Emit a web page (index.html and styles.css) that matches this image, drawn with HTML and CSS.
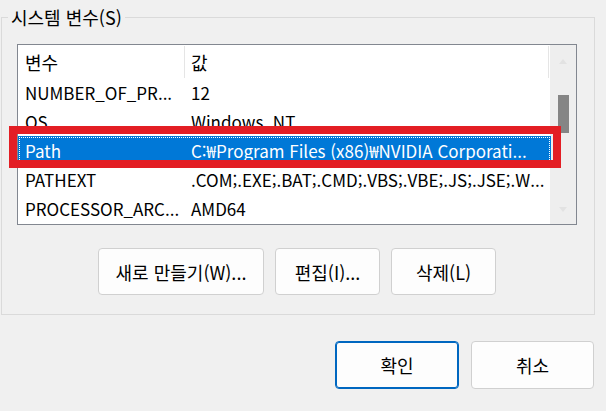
FILE: index.html
```html
<!DOCTYPE html>
<html lang="ko">
<head>
<meta charset="utf-8">
<link rel="stylesheet" href="styles.css">
</head>
<body>
<div class="dialog">
  <fieldset class="group">
    <legend class="group-title">시스템 변수(S)</legend>
    <div class="listbox">
      <div class="list">
        <div class="row head">
          <div class="cell name">변수</div>
          <div class="cell value">값</div>
        </div>
        <div class="row">
          <div class="cell name">NUMBER_OF_PR...</div>
          <div class="cell value">12</div>
        </div>
        <div class="row">
          <div class="cell name">OS</div>
          <div class="cell value">Windows_NT</div>
        </div>
        <div class="row selected">
          <div class="cell name">Path</div>
          <div class="cell value">C:₩Program Files (x86)₩NVIDIA Corporati...</div>
          <div class="highlight"></div>
        </div>
        <div class="row">
          <div class="cell name">PATHEXT</div>
          <div class="cell value">.COM;.EXE;.BAT;.CMD;.VBS;.VBE;.JS;.JSE;.W...</div>
        </div>
        <div class="row">
          <div class="cell name">PROCESSOR_ARC...</div>
          <div class="cell value">AMD64</div>
        </div>
      </div>
      <div class="scrollbar">
        <svg class="arrow up" width="8" height="6" viewBox="0 0 8 6"><path d="M0 6 L4 1 L8 6 Z"/></svg>
        <div class="thumb"></div>
        <div class="spacer"></div>
        <svg class="arrow down" width="8" height="6" viewBox="0 0 8 6"><path d="M0 0 L4 5 L8 0 Z"/></svg>
      </div>
    </div>
    <div class="actions">
      <button class="btn w-new">새로 만들기(W)...</button>
      <button class="btn w-small">편집(I)...</button>
      <button class="btn w-small">삭제(L)</button>
    </div>
  </fieldset>
  <div class="footer">
    <button class="btn w-ok default">확인</button>
    <button class="btn w-cancel">취소</button>
  </div>
</div>
</body>
</html>
```

FILE: styles.css
```css
html, body {
  margin: 0;
  padding: 0;
  background: #f0f0f0;
}
body {
  font-family: "Noto Sans CJK KR", "Noto Sans", sans-serif;
  font-size: 18px;
  color: #000;
  width: 606px;
  height: 411px;
  overflow: hidden;
}
.dialog {
  padding: 4px 12px 0 1px;
}
.group {
  margin: 0;
  padding: 0 0 19px 0;
  border: 1px solid #dadada;
  width: 594px;
  box-sizing: border-box;
  min-width: 0;
}
.group-title {
  margin-left: 6px;
  padding: 0 3px;
  line-height: 26px;
  font-size: 18px;
}
.listbox {
  margin: 14px 0 0 15px;
  width: 560px;
  height: 181px;
  box-sizing: border-box;
  border: 1px solid #828790;
  background: #fff;
  display: flex;
}
.list {
  width: 532px;
  display: flex;
  flex-direction: column;
}
.row {
  position: relative;
  display: grid;
  grid-template-columns: 167px 364px;
  height: 29px;
  line-height: 29px;
  font-size: 17px;
  white-space: nowrap;
}
.row.head {
  height: 33px;
  line-height: 33px;
  font-size: 18px;
}
.cell {
  overflow: hidden;
}
.cell.name {
  padding-left: 7px;
}
.cell.value {
  padding-left: 6px;
}
.head .cell {
  border-right: 1px solid #e5e5e5;
  margin: 1px 0 0;
}
.selected {
  background: #0078d7;
  color: #fff;
  width: 533px;
  outline: 1px dotted #fff;
  outline-offset: -2px;
}
.highlight {
  position: absolute;
  left: -9px;
  top: -10px;
  width: 552px;
  height: 42px;
  box-sizing: border-box;
  border: 8px solid #e31e24;
}
.scrollbar {
  width: 26px;
  background: #eeeeee;
  display: flex;
  flex-direction: column;
  align-items: center;
}
.arrow {
  fill: #e2e2e2;
}
.arrow.up {
  margin-top: 13px;
}
.thumb {
  margin-top: 31px;
  width: 11px;
  height: 38px;
  background: #858585;
}
.spacer {
  flex: 1;
}
.arrow.down {
  margin-bottom: 11px;
}
.actions {
  display: flex;
  gap: 11px;
  margin: 23px 0 0 96px;
}
.btn {
  font-family: inherit;
  font-size: 18px;
  color: #000;
  height: 47px;
  padding: 0;
  background: #fdfdfd;
  border: 1px solid #d0d0d0;
  border-radius: 4px;
  box-sizing: border-box;
}
.w-new { width: 166px; }
.w-small { width: 105px; }
.footer {
  display: flex;
  justify-content: flex-end;
  gap: 12px;
  margin-top: 26px;
}
.w-ok { width: 124px; height: 48px; }
.w-cancel { width: 123px; height: 48px; }
.btn.default {
  border: 1px solid #0067c0;
  box-shadow: inset 0 0 0 1px #0067c0;
}
```
